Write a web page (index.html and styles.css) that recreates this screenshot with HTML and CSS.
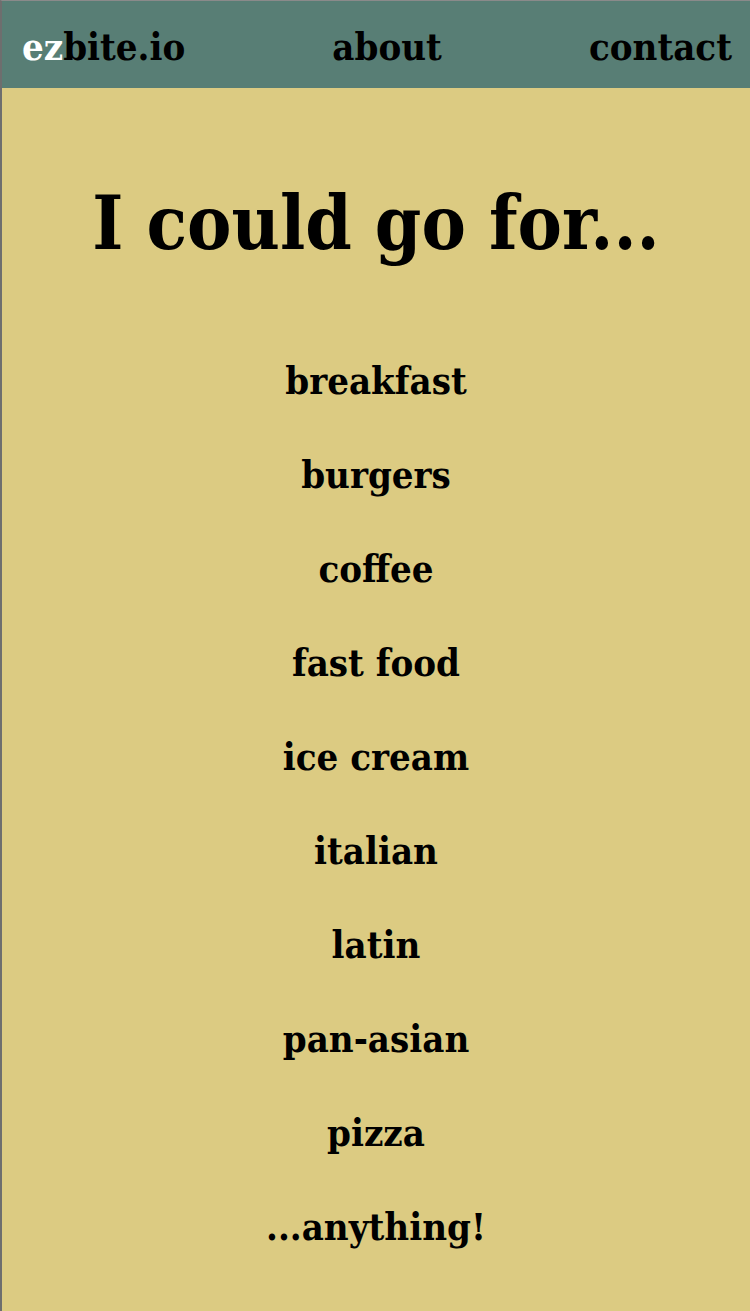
FILE: index.html
```html
<!DOCTYPE html>
<html>
<head>
<meta charset="utf-8">
<link rel="stylesheet" href="styles.css">
</head>
<body>
<div class="frame">
  <header class="nav">
    <span class="logo"><span class="ez">ez</span>bite.io</span>
    <span class="link">about</span>
    <span class="link">contact</span>
  </header>
  <main class="content">
    <h1 class="title">I could go for...</h1>
    <ul class="list">
      <li>breakfast</li>
      <li>burgers</li>
      <li>coffee</li>
      <li>fast food</li>
      <li>ice cream</li>
      <li>italian</li>
      <li>latin</li>
      <li>pan-asian</li>
      <li>pizza</li>
      <li>...anything!</li>
    </ul>
  </main>
</div>
</body>
</html>
```
FILE: styles.css
```css
html, body {
  margin: 0;
  padding: 0;
  height: 100%;
}
body {
  background: #dccb82;
  font-family: "DejaVu Serif Condensed", "DejaVu Serif", "Liberation Serif", serif;
  font-stretch: condensed;
  font-weight: bold;
  color: #000;
}
.frame {
  min-height: 100%;
  box-sizing: border-box;
  border-left: 2px solid #6e6e6e;
  border-top: 1px solid #8a8a8a;
  background: #dccb82;
}
.nav {
  height: 87px;
  background: #587e75;
  display: flex;
  align-items: center;
  justify-content: space-between;
  padding: 4px 18px 0 20px;
  box-sizing: border-box;
  font-size: 38px;
}
.ez { color: #fff; }
.content {
  text-align: center;
}
.title {
  margin: 0;
  padding-top: 92px;
  font-size: 74px;
  line-height: 86px;
}
.list {
  list-style: none;
  margin: 0;
  padding: 0;
  padding-top: 68px;
  font-size: 38px;
}
.list li {
  line-height: 94px;
}
```
